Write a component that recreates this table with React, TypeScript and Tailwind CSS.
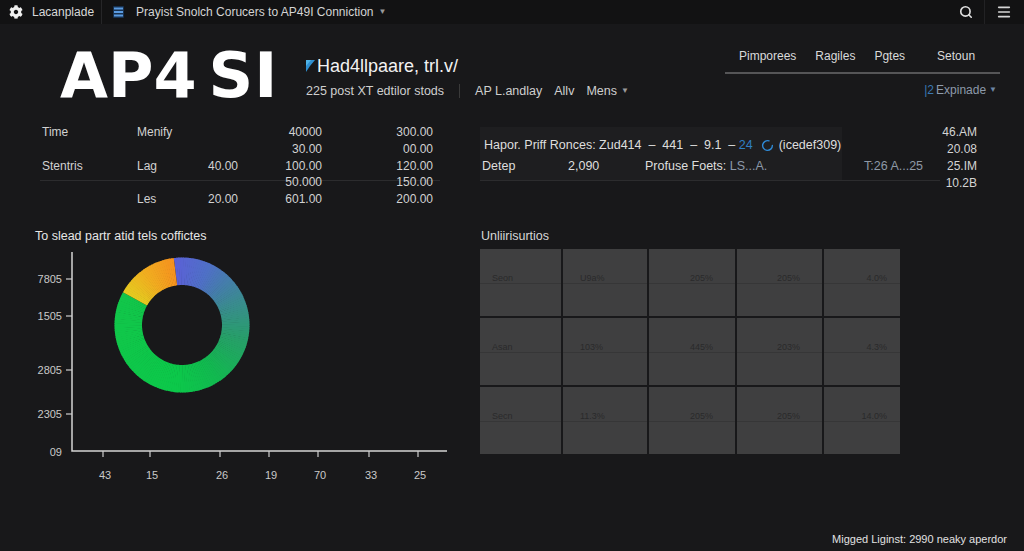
import { Search, Menu, LoaderCircle } from 'lucide-react';
import { FaCog } from 'react-icons/fa';

const tableRows = [
  ['Time', 'Menify', '', '40000', '300.00'],
  ['', '', '', '30.00', '00.00'],
  ['Stentris', 'Lag', '40.00', '100.00', '120.00'],
  ['', '', '', '50.000', '150.00'],
  ['', 'Les', '20.00', '601.00', '200.00'],
];

const gridRows = [
  ['Seon', 'U9a%', '205%', '205%', '4.0%'],
  ['Asan', '103%', '445%', '203%', '4.3%'],
  ['Secn', '11.3%', '205%', '205%', '14.0%'],
];

// per-column padding / alignment in the grey grid
const cellPad = ['pl-[12px] text-left', 'pl-[17px] text-left', 'pr-[22px] text-right', 'pl-[40px] text-left', 'pr-[13px] text-right'];

const hex = (h: string) => [1, 3, 5].map(i => parseInt(h.slice(i, i + 2), 16));
function colorAt(stops: [number, string][], a: number) {
  for (let i = 0; i < stops.length - 1; i++) {
    const [a0, c0] = stops[i];
    const [a1, c1] = stops[i + 1];
    if (a >= a0 && a <= a1) {
      const t = (a - a0) / (a1 - a0 || 1);
      const x = hex(c0), y = hex(c1);
      return `rgb(${x.map((v, k) => Math.round(v + (y[k] - v) * t)).join(',')})`;
    }
  }
  return stops[stops.length - 1][1];
}

function arc(cx: number, cy: number, r0: number, r1: number, a0: number, a1: number) {
  const p = (r: number, a: number) => {
    const rad = ((a - 90) * Math.PI) / 180;
    return `${(cx + r * Math.cos(rad)).toFixed(2)} ${(cy + r * Math.sin(rad)).toFixed(2)}`;
  };
  return `M${p(r1, a0)} A${r1} ${r1} 0 0 1 ${p(r1, a1)} L${p(r0, a1)} A${r0} ${r0} 0 0 0 ${p(r0, a0)}Z`;
}

const blueGreen: [number, string][] = [
  [353, '#5b60d6'],
  [385, '#4f70c6'],
  [425, '#3c8a92'],
  [465, '#26a068'],
  [505, '#12b850'],
  [545, '#0cc84a'],
  [659, '#12c64a'],
];
const yellow: [number, string][] = [
  [299, '#e4cc20'],
  [326, '#f1ac20'],
  [353, '#f5911f'],
];

function Donut() {
  const segs: { d: string; c: string }[] = [];
  for (let a = 353; a < 659; a += 2) {
    segs.push({ d: arc(182, 78, 40, 67.5, a, Math.min(a + 2.6, 659)), c: colorAt(blueGreen, a + 1) });
  }
  for (let a = 299; a < 353; a += 2) {
    segs.push({ d: arc(182, 78, 40, 67.5, a, Math.min(a + 2.6, 353)), c: colorAt(yellow, a + 1) });
  }
  return (
    <g>
      {segs.map((s, i) => (
        <path key={i} d={s.d} fill={s.c} />
      ))}
    </g>
  );
}

function Chart() {
  const yLabels: [string, number][] = [
    ['7805', 32],
    ['1505', 69],
    ['2805', 123],
    ['2305', 167],
  ];
  const xLabels: [string, number][] = [
    ['43', 105],
    ['15', 152],
    ['26', 222],
    ['19', 271],
    ['70', 320],
    ['33', 371],
    ['25', 420],
  ];
  return (
    <svg width="460" height="240" className="block">
      <Donut />
      <path d="M72 5 V204 H447" stroke="#d4d4d4" strokeWidth="1.5" fill="none" />
      {yLabels.map(([t, y]) => (
        <g key={t}>
          <line x1="66" x2="72" y1={y} y2={y} stroke="#cfcfcf" strokeWidth="1.2" />
          <text x="62" y={y + 4} textAnchor="end" fontSize="11" fill="#c9c9c9" fontFamily="'Liberation Sans', sans-serif">
            {t}
          </text>
        </g>
      ))}
      <text x="62" y="209" textAnchor="end" fontSize="11" fill="#c9c9c9" fontFamily="'Liberation Sans', sans-serif">
        09
      </text>
      {xLabels.map(([t, x]) => (
        <g key={t + x}>
          <line x1={x - 2} x2={x - 2} y1="204" y2="210" stroke="#cfcfcf" strokeWidth="1.2" />
          <text x={x} y="232" textAnchor="middle" fontSize="11" fill="#c9c9c9" fontFamily="'Liberation Sans', sans-serif">
            {t}
          </text>
        </g>
      ))}
    </svg>
  );
}

export default function App() {
  return (
    <div className="w-[1024px] h-[551px] overflow-hidden flex flex-col bg-[#18181a] text-[#dcdcdc] font-['Liberation_Sans',Arial,sans-serif]">
      {/* top bar */}
      <div className="h-[24px] shrink-0 flex items-center bg-[#121213] text-[12px]">
        <FaCog className="ml-[9px] w-[14px] h-[14px] text-[#f0f0f0]" />
        <span className="ml-[9px] text-[#d8d8d8]">Lacanplade</span>
        <div className="ml-[7px] w-px h-full bg-[#262628]" />
        <svg width="11" height="12" viewBox="0 0 11 12" className="ml-[11px]">
          <rect width="11" height="12" rx="1" fill="#17304e" />
          <rect x="1" y="1.5" width="9" height="2" fill="#5a9ae0" />
          <rect x="1" y="5" width="9" height="2" fill="#5a9ae0" />
          <rect x="1" y="8.5" width="9" height="2" fill="#5a9ae0" />
        </svg>
        <span className="ml-[12px] text-[#d4d4d4]">Prayist Snolch Corucers to AP49I Conniction</span>
        <span className="ml-[5px] text-[8px] text-[#9a9a9a]">▼</span>
        <div className="ml-auto flex items-center h-full">
          <Search className="w-[14px] h-[14px] text-[#e0e0e0]" strokeWidth={2.8} />
          <div className="ml-[11px] w-px h-full bg-[#222224]" />
          <Menu className="ml-[11px] mr-[12px] w-[16px] h-[16px] text-[#d6d6d6]" strokeWidth={2.4} />
        </div>
      </div>

      {/* header */}
      <div className="h-[100px] shrink-0 flex">
        <div className="w-[306px] pl-[60px] pt-[21px]">
          <div className="text-[62px] leading-none font-bold text-white whitespace-nowrap font-['DejaVu_Sans',sans-serif]">
            AP4<span className="ml-[12px]">S</span>
            <span className="ml-[1px]">I</span>
          </div>
        </div>
        <div className="pt-[31px]">
          <div className="flex items-center h-[22px]">
            <svg width="10" height="14" viewBox="0 0 10 14" className="mr-[1px]">
              <polygon points="0,1 9,1 4,7 0,13" fill="#2f8fd0" />
              <polygon points="0,1 5,1 0,7" fill="#4fb4e8" />
            </svg>
            <span className="text-[18px] text-[#f2f2f2]">Had4llpaare, trl.v/</span>
          </div>
          <div className="mt-[6px] flex items-center h-[16px] text-[12.5px] text-[#cfcfcf]">
            <span>225 post XT edtilor stods</span>
            <div className="ml-[15px] w-px h-[14px] bg-[#3a3a3a]" />
            <span className="ml-[15px]">AP L.andlay</span>
            <span className="ml-[12px]">Allv</span>
            <span className="ml-[12px]">Mens</span>
            <span className="ml-[4px] text-[8px] text-[#9a9a9a]">▼</span>
          </div>
        </div>
        <div className="ml-auto mr-[24px] w-[275px] pt-[24px]">
          <div className="flex h-[26px] pb-[8px] leading-[16px] text-[12px] text-[#dadada] border-b-2 border-[#555557]">
            <span className="ml-[14px]">Pimporees</span>
            <span className="ml-[19px]">Ragiles</span>
            <span className="ml-[19px]">Pgtes</span>
            <span className="ml-[32px]">Setoun</span>
          </div>
          <div className="mt-[8px] pr-[3px] flex justify-end items-center leading-[16px] text-[12px]">
            <span className="text-[#3a78b4]">|2</span>
            <span className="ml-[2px] text-[#8d9aab]">Expinade</span>
            <span className="ml-[3px] text-[8px] text-[#6c86a4]">▼</span>
          </div>
        </div>
      </div>

      {/* data rows */}
      <div className="h-[102px] shrink-0 flex">
        <div className="ml-[40px] w-[400px] text-[12px] text-[#d2d2d2]">
          {tableRows.map((r, i) => (
            <div
              key={i}
              className={`grid grid-cols-[97px_60px_41px_84px_111px] h-[16.8px] leading-[16.8px] ${
                i === 3 ? 'bg-[linear-gradient(to_bottom,transparent_6px,#2c2c2e_6px,#2c2c2e_7px,transparent_7px)]' : ''
              }`}
            >
              <span className="pl-[2px]">{r[0]}</span>
              <span>{r[1]}</span>
              <span className="text-right">{r[2]}</span>
              <span className="text-right">{r[3]}</span>
              <span className="text-right">{r[4]}</span>
            </div>
          ))}
        </div>
        <div className="ml-[40px] flex">
          <div className="w-[460px] pt-[3px]">
            <div className="pt-[8px] pb-[4px] border-b border-[#2c2c2e] bg-[linear-gradient(to_right,#1e1e20_362px,transparent_362px)] text-[12.5px] text-[#dedede]">
              <div className="h-[20px] flex items-center pl-[4px] whitespace-nowrap">
                <span>Hapor. Priff Ronces: Zud414&nbsp; –&nbsp; 441&nbsp; –&nbsp; 9.1&nbsp; –&nbsp; </span>
                <span className="text-[#2f7fc4]">24</span>
                <LoaderCircle className="ml-[8px] w-[13px] h-[13px] text-[#2f8ad6]" strokeWidth={2.6} />
                <span className="ml-[5px]">(icedef309)</span>
              </div>
              <div className="mt-[1px] h-[20px] flex items-center pl-[2px] whitespace-nowrap">
                <span className="w-[86px]">Detep</span>
                <span className="w-[77px]">2,090</span>
                <span className="w-[219px]">
                  Profuse Foets: <span className="text-[#8c98a8]">LS...A.</span>
                </span>
                <span className="text-[#8e98a6]">T:26 A...25</span>
              </div>
            </div>
          </div>
          <div className="w-[37px] text-right text-[12px] text-[#d4d4d4]">
            {['46.AM', '20.08', '25.IM', '10.2B'].map(v => (
              <div key={v} className="h-[17px] leading-[17px]">
                {v}
              </div>
            ))}
          </div>
        </div>
      </div>

      {/* chart + grid */}
      <div className="flex">
        <div className="w-[460px]">
          <div className="mt-[2px] pl-[35px] h-[16px] leading-[16px] text-[12.5px] text-[#e6e6e6]">
            To slead partr atid tels coffictes
          </div>
          <div className="mt-[3px]">
            <Chart />
          </div>
        </div>
        <div className="ml-[20px]">
          <div className="mt-[2px] pl-[1px] h-[16px] leading-[16px] text-[12.5px] text-[#d6d6d6]">Unliirisurtios</div>
          <div className="mt-[5px] grid grid-cols-[81px_84px_86px_85px_76px] grid-rows-[67px_67px_67px] gap-[2px]">
            {gridRows.map((r, i) =>
              r.map((c, j) => (
                <div key={`${i}-${j}`} className="bg-[#3f3f40] flex flex-col">
                  <div className={`h-[34px] pt-[24px] leading-[10px] text-[9px] text-[#2a2a2b] ${cellPad[j]}`}>{c}</div>
                  <div className="flex-1 border-t border-[#363637]" />
                </div>
              ))
            )}
          </div>
        </div>
      </div>

      <div className="mt-auto flex justify-end pr-[17px] pb-[4px] text-[11px] text-[#e2e2e2]">
        Migged Liginst: 2990 neaky aperdor
      </div>
    </div>
  );
}
